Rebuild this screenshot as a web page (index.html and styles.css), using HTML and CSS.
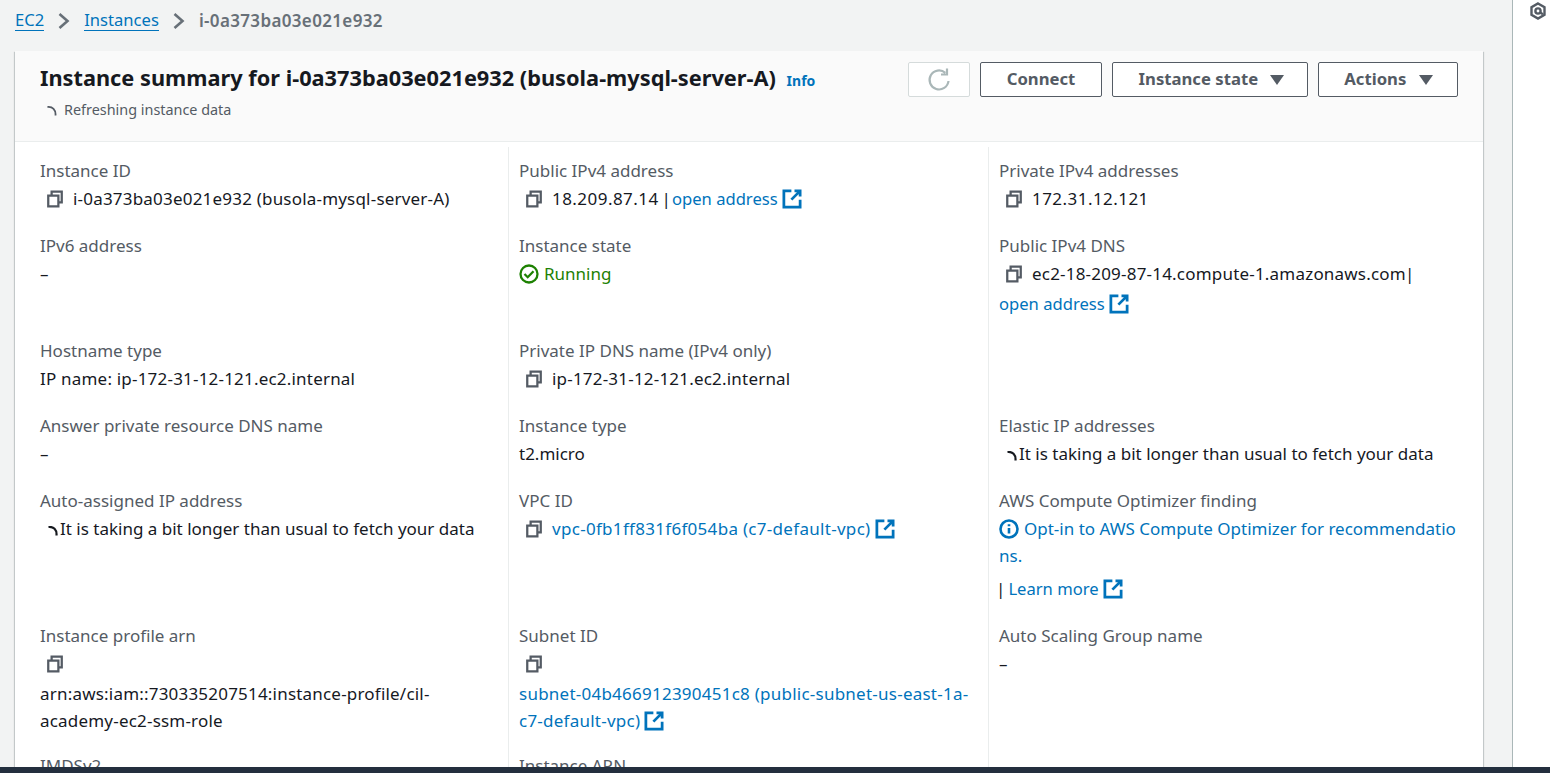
FILE: index.html
```html
<!DOCTYPE html>
<html lang="en">
<head>
    <meta charset="UTF-8">
    <meta name="viewport" content="width=device-width, initial-scale=1.0">
    <title>Instance summary</title>
    <link rel="stylesheet" href="styles.css">
</head>
<body>
    <svg class="sprite" width="0" height="0">
        <symbol id="copy" viewBox="0 0 16 16"><path d="M2 5h9v9.5H2zM5 5V1.5h9V11h-3"/></symbol>
        <symbol id="ext" viewBox="0 0 16 16"><path d="M14.5 8.5v6h-13v-13h6M10 1.5h4.5V6M14.5 1.5 7.5 8.5"/></symbol>
        <symbol id="spin" viewBox="0 0 10 10"><path d="M.5 1C5.5.5 9 3.5 8.5 9.5"/></symbol>
    </svg>

    <div class="app">
        <main class="content">
            <nav class="crumbs">
                <a href="#">EC2</a>
                <svg class="chev" viewBox="0 0 14 18"><path d="M2.5 2l8 7-8 7"/></svg>
                <a href="#">Instances</a>
                <svg class="chev" viewBox="0 0 14 18"><path d="M2.5 2l8 7-8 7"/></svg>
                <span class="crumb-current">i-0a373ba03e021e932</span>
            </nav>

            <section class="card">
                <header class="card-head">
                    <div>
                        <h1 class="title">Instance summary for i-0a373ba03e021e932 (busola-mysql-server-A) <a class="info" href="#">Info</a></h1>
                        <p class="refreshing"><svg class="spinner"><use href="#spin"/></svg>Refreshing instance data</p>
                    </div>
                    <div class="actions">
                        <button class="btn btn-refresh">
                            <svg class="refresh" viewBox="0 0 24 24"><path d="M21.5 13a9.5 9.5 0 1 1-3.2-8.2M20 .5v6h-6"/></svg>
                        </button>
                        <button class="btn btn-connect">Connect</button>
                        <button class="btn btn-state">Instance state <span class="caret"></span></button>
                        <button class="btn btn-actions">Actions <span class="caret"></span></button>
                    </div>
                </header>

                <div class="details">
                    <div class="item">
                        <div class="label">Instance ID</div>
                        <div class="value ids"><svg class="copy"><use href="#copy"/></svg>i-0a373ba03e021e932 (busola-mysql-server-A)</div>
                    </div>
                    <div class="item">
                        <div class="label">Public IPv4 address</div>
                        <div class="value"><svg class="copy"><use href="#copy"/></svg><span class="ip">18.209.87.14</span><span class="pipe">|</span><a class="short" href="#">open address<svg class="ext"><use href="#ext"/></svg></a></div>
                    </div>
                    <div class="item">
                        <div class="label">Private IPv4 addresses</div>
                        <div class="value"><svg class="copy"><use href="#copy"/></svg><span class="ip">172.31.12.121</span></div>
                    </div>

                    <div class="item">
                        <div class="label">IPv6 address</div>
                        <div class="value">–</div>
                    </div>
                    <div class="item">
                        <div class="label">Instance state</div>
                        <div class="value running">
                            <svg class="status" viewBox="0 0 20 20"><circle cx="10" cy="10" r="8.5"/><path d="M5.5 10l3.2 3.2 5.8-6"/></svg>Running
                        </div>
                    </div>
                    <div class="item">
                        <div class="label">Public IPv4 DNS</div>
                        <div class="value ids"><svg class="copy"><use href="#copy"/></svg>ec2-18-209-87-14.compute-1.amazonaws.com<span class="pipe pipe-end">|</span></div>
                        <div class="value value-tall"><a class="short" href="#">open address<svg class="ext"><use href="#ext"/></svg></a></div>
                    </div>

                    <div class="item">
                        <div class="label">Hostname type</div>
                        <div class="value ids">IP name: ip-172-31-12-121.ec2.internal</div>
                    </div>
                    <div class="item">
                        <div class="label">Private IP DNS name (IPv4 only)</div>
                        <div class="value ids"><svg class="copy"><use href="#copy"/></svg>ip-172-31-12-121.ec2.internal</div>
                    </div>
                    <div class="item"></div>

                    <div class="item">
                        <div class="label">Answer private resource DNS name</div>
                        <div class="value">–</div>
                    </div>
                    <div class="item">
                        <div class="label">Instance type</div>
                        <div class="value">t2.micro</div>
                    </div>
                    <div class="item">
                        <div class="label">Elastic IP addresses</div>
                        <div class="value"><svg class="spinner spinner-dark"><use href="#spin"/></svg>It is taking a bit longer than usual to fetch your data</div>
                    </div>

                    <div class="item">
                        <div class="label">Auto-assigned IP address</div>
                        <div class="value"><svg class="spinner spinner-dark"><use href="#spin"/></svg>It is taking a bit longer than usual to fetch your data</div>
                    </div>
                    <div class="item">
                        <div class="label">VPC ID</div>
                        <div class="value ids"><svg class="copy"><use href="#copy"/></svg><a href="#">vpc-0fb1ff831f6f054ba (c7-default-vpc)<svg class="ext"><use href="#ext"/></svg></a></div>
                    </div>
                    <div class="item">
                        <div class="label">AWS Compute Optimizer finding</div>
                        <div class="value">
                            <a href="#"><svg class="status status-info" viewBox="0 0 20 20"><circle cx="10" cy="10" r="8.5"/><path d="M10 9v5.5M10 5.2v2"/></svg>Opt-in to AWS Compute Optimizer for recommendatio<br>ns.</a>
                        </div>
                        <div class="value value-learn"><span class="pipe pipe-start">|</span><a class="short" href="#">Learn more<svg class="ext"><use href="#ext"/></svg></a></div>
                    </div>

                    <div class="item item-tight">
                        <div class="label">Instance profile arn</div>
                        <div class="value value-icon"><svg class="copy"><use href="#copy"/></svg></div>
                        <div class="value ids">arn:aws:iam::730335207514:instance-profile/cil-<br>academy-ec2-ssm-role</div>
                    </div>
                    <div class="item item-tight">
                        <div class="label">Subnet ID</div>
                        <div class="value value-icon"><svg class="copy"><use href="#copy"/></svg></div>
                        <div class="value ids subnet"><a href="#">subnet-04b466912390451c8 (public-subnet-us-east-1a-<br>c7-default-vpc)<svg class="ext"><use href="#ext"/></svg></a></div>
                    </div>
                    <div class="item item-tight">
                        <div class="label">Auto Scaling Group name</div>
                        <div class="value">–</div>
                    </div>

                    <div class="item">
                        <div class="label">IMDSv2</div>
                    </div>
                    <div class="item">
                        <div class="label">Instance ARN</div>
                    </div>
                    <div class="item"></div>
                </div>
            </section>
        </main>

        <aside class="side-rail">
            <svg class="hex" viewBox="0 0 18 18"><path d="M9 1.5l6.5 3.7v7.6L9 16.5l-6.5-3.7V5.2z"/><circle cx="9" cy="9" r="2.6"/><path d="M11 10.5l3 1.8"/></svg>
        </aside>
    </div>

    <footer class="bottom-bar"></footer>
</body>
</html>
```

FILE: styles.css
```css
/* General Styles */
body {
    font-family: "Noto Sans", sans-serif;
    font-size: 17px;
    color: #16191f;
    background-color: #f2f3f3;
    margin: 0;
    height: 100vh;
    overflow: hidden;
    display: flex;
    flex-direction: column;
}

a {
    color: #0073bb;
    text-decoration: none;
}

svg {
    fill: none;
}

.sprite {
    position: absolute;
}

.app {
    flex: 1;
    min-height: 0;
    display: flex;
}

.content {
    flex: 1;
    min-width: 0;
    min-height: 0;
    overflow: hidden;
    padding: 0 29px 0 15px;
}

/* Breadcrumbs */
.crumbs {
    height: 41px;
    display: flex;
    align-items: center;
    gap: 13px;
}

.crumbs a {
    font-size: 16.6px;
    color: #0073bb;
    border-bottom: 1px solid #0073bb;
    line-height: 20px;
}

.chev {
    width: 14px;
    height: 18px;
    stroke: #687078;
    stroke-width: 2.6;
}

.crumb-current {
    color: #687078;
    font-weight: 600;
    letter-spacing: .35px;
}

/* Card */
.card {
    margin: 10px 0 2px;
    background-color: #fff;
    box-shadow: 0 1px 1px rgba(0, 28, 36, .3), 1px 1px 1px rgba(0, 28, 36, .15), -1px 1px 1px rgba(0, 28, 36, .15);
}

.card-head {
    height: 91px;
    box-sizing: border-box;
    padding: 9px 25px 0 25px;
    display: flex;
    justify-content: space-between;
    background-color: #fafafa;
    border-bottom: 1px solid #eaeded;
}

.title {
    margin: 0;
    font-size: 21.75px;
    line-height: 36px;
    font-weight: 700;
}

.info {
    font-size: 14px;
    margin-left: 5px;
}

.refreshing {
    margin: 1px 0 0;
    font-size: 14.4px;
    line-height: 20px;
    color: #545b64;
}

/* Buttons */
.actions {
    display: flex;
    gap: 10px;
    height: 35px;
    margin-top: 2px;
}

.btn {
    font-family: inherit;
    font-size: 16.7px;
    font-weight: 700;
    color: #545b64;
    background-color: #fff;
    border: 1px solid #545b64;
    border-radius: 2px;
    padding: 0 0 2px;
}

.btn-refresh {
    width: 62px;
    border-color: #d5dbdb;
    padding: 0;
}

.refresh {
    width: 24px;
    height: 24px;
    stroke: #aab7b8;
    stroke-width: 2.2;
    vertical-align: middle;
}

.btn-connect {
    width: 122px;
}

.btn-state {
    width: 196px;
    padding-left: 3px;
}

.btn-actions {
    width: 140px;
    padding-left: 1px;
}

.caret {
    display: inline-block;
    margin-left: 8px;
    border-left: 7px solid transparent;
    border-right: 7px solid transparent;
    border-top: 10px solid #545b64;
}

/* Detail grid */
.details {
    display: grid;
    grid-template-columns: 493px 480px 1fr;
    margin-top: 5px;
}

.item {
    padding: 0 10px 19px 25px;
}

.item:nth-child(-n+3) {
    padding-top: 9px;
}

.item:nth-child(3n+2),
.item:nth-child(3n) {
    border-left: 1px solid #eaeded;
    padding-left: 10px;
}

.item-tight {
    padding-bottom: 17px;
}

.label {
    color: #545b64;
    line-height: 29px;
}

.value {
    line-height: 27px;
}

.ids {
    letter-spacing: .2px;
}

.ip {
    letter-spacing: .45px;
}

.value.ids a {
    letter-spacing: .3px;
}

.value.subnet a {
    letter-spacing: .24px;
}

.short {
    font-size: 16.6px;
}

.pipe {
    margin: 0 1px 0 3px;
}

.pipe-end {
    margin: 0 0 0 -1px;
}

.pipe-start {
    margin: 0 3px 0 -3px;
}

.value-tall {
    margin-top: 3px;
}

.value-learn {
    margin-top: 6px;
}

.value-icon {
    height: 30px;
}

.running {
    color: #1d8102;
}

/* Icons */
.copy {
    width: 18px;
    height: 18px;
    stroke: #545b64;
    stroke-width: 2;
    margin: 0 9px 0 6px;
    vertical-align: -3px;
}

.ext {
    width: 20px;
    height: 20px;
    stroke: #0073bb;
    stroke-width: 2.2;
    margin-left: 4px;
    vertical-align: -4px;
}

.spinner {
    width: 10px;
    height: 10px;
    stroke: #545b64;
    stroke-width: 1.8;
    margin: 0 7px;
    vertical-align: -1px;
}

.spinner-dark {
    stroke: #16191f;
    stroke-width: 2.2;
    margin: 0 2px 0 8px;
}

.status {
    width: 20px;
    height: 20px;
    stroke: #1d8102;
    stroke-width: 2.3;
    margin-right: 5px;
    vertical-align: -4px;
}

.status-info {
    stroke: #0073bb;
    stroke-width: 2.6;
}

/* Right rail */
.side-rail {
    width: 37px;
    background-color: #fff;
    border-left: 1px solid #aab7b8;
}

.hex {
    display: block;
    width: 18px;
    height: 20px;
    margin: 1px 0 0 16px;
    stroke: #545b64;
    stroke-width: 2.4;
}

.bottom-bar {
    height: 6px;
    flex: none;
    background-color: #232f3e;
}
```
